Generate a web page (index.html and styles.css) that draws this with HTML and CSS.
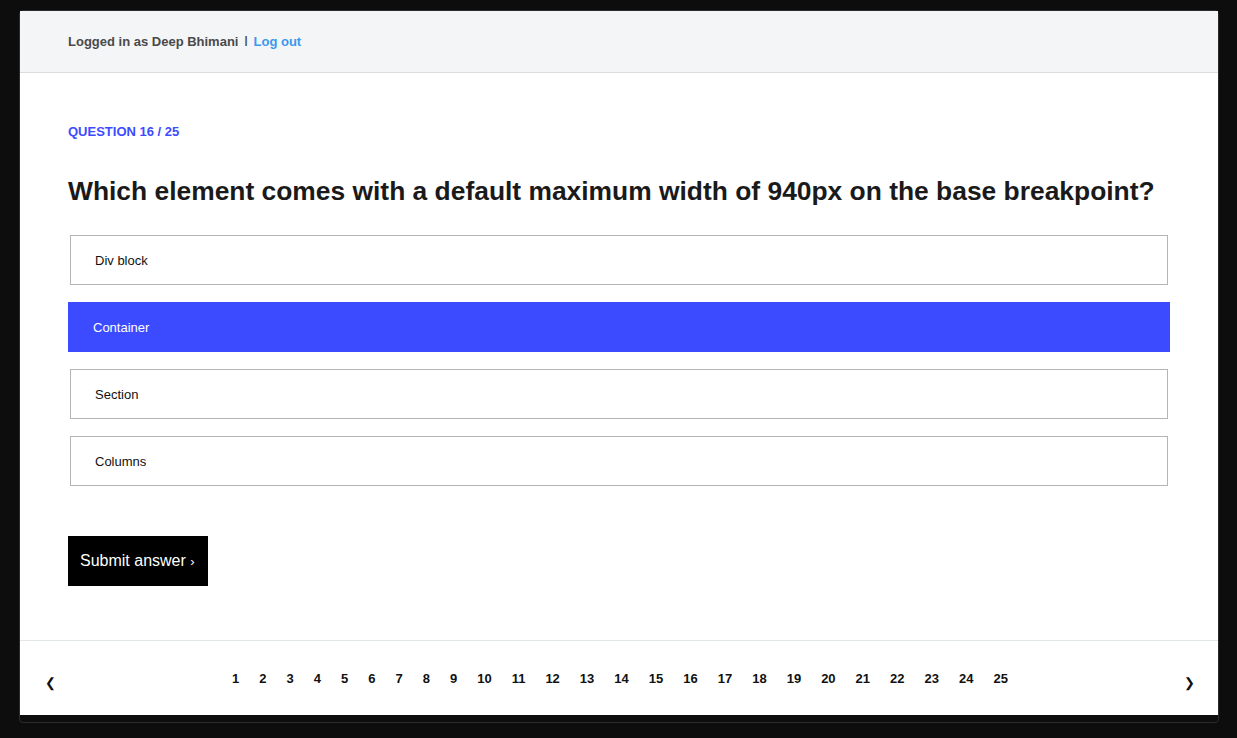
FILE: index.html
```html
<!DOCTYPE html>
<html>
<head>
<meta charset="utf-8">
<link rel="stylesheet" href="styles.css">
</head>
<body>
<div class="frame">
  <div class="panel">
    <header class="topbar">
      <span class="user">Logged in as Deep Bhimani</span>
      <span class="sep">|</span>
      <a class="logout" href="#">Log out</a>
    </header>
    <main class="quiz">
      <div class="counter">QUESTION 16 / 25</div>
      <h1 class="question">Which element comes with a default maximum width of 940px on the base breakpoint?</h1>
      <div class="options">
        <div class="option">Div block</div>
        <div class="option selected">Container</div>
        <div class="option">Section</div>
        <div class="option">Columns</div>
      </div>
      <button class="submit">Submit answer <span class="chev">›</span></button>
    </main>
    <footer class="pager">
      <span class="arrow">❮</span>
      <div class="pages">
        <span>1</span><span>2</span><span>3</span><span>4</span><span>5</span><span>6</span><span>7</span><span>8</span><span>9</span><span>10</span><span>11</span><span>12</span><span>13</span><span>14</span><span>15</span><span>16</span><span>17</span><span>18</span><span>19</span><span>20</span><span>21</span><span>22</span><span>23</span><span>24</span><span>25</span>
      </div>
      <span class="arrow">❯</span>
    </footer>
  </div>
</div>
</body>
</html>
```
FILE: styles.css
```css
* { box-sizing: border-box; }
html, body { margin: 0; padding: 0; }
body {
  background: #0d0d0d;
  font-family: "Liberation Sans", Arial, sans-serif;
  height: 738px;
  overflow: hidden;
}
.frame {
  margin: 10px 18px 0 19px;
  border: 1px solid #2c2c2c;
  border-radius: 4px;
  padding-bottom: 7px;
  background: #0d0d0d;
}
.panel {
  background: #fff;
}
.topbar {
  height: 62px;
  background: #f4f5f7;
  border-bottom: 1px solid #dcdcdc;
  display: flex;
  align-items: center;
  padding: 0 48px;
  font-size: 13px;
  font-weight: bold;
}
.user { color: #4a4a4a; }
.sep {
  color: #4a4a4a;
  font-size: 11px;
  margin: -4px 6px 0 6px;
  font-weight: bold;
}
.logout { color: #3b98ee; text-decoration: none; }
.quiz {
  padding: 50px 48px 54px 48px;
}
.counter {
  color: #3d4bff;
  font-size: 13px;
  line-height: 18px;
  font-weight: bold;
}
.question {
  margin: 34px 0 28px 0;
  font-size: 26.4px;
  line-height: 32px;
  font-weight: bold;
  color: #1a1a1a;
}
.options {
  display: flex;
  flex-direction: column;
  gap: 17px;
  padding: 0 2px;
}
.option {
  height: 50px;
  border: 1px solid #b5b5b5;
  display: flex;
  align-items: center;
  padding-left: 24px;
  font-size: 13px;
  color: #111;
}
.option.selected {
  margin: 0 -2px;
  border-color: #3c4bff;
  background: #3c4bff;
  color: #fff;
}
.submit {
  margin-top: 50px;
  height: 50px;
  width: 140px;
  background: #000;
  color: #fff;
  border: 0;
  font-family: "Liberation Sans", Arial, sans-serif;
  font-size: 16px;
  padding: 0 12px;
  text-align: left;
  display: block;
}
.chev { font-size: 13px; }
.pager {
  border-top: 1px solid #e1e6e6;
  height: 75px;
  display: flex;
  align-items: center;
  justify-content: space-between;
  padding: 0 22px 0 24px;
}
.arrow {
  font-size: 13px;
  color: #111;
  margin-top: 8px;
  width: 12px;
  text-align: center;
}
.pages {
  display: flex;
  font-size: 13px;
  font-weight: bold;
  color: #111;
}
.pages span { padding: 0 10px; }
```
